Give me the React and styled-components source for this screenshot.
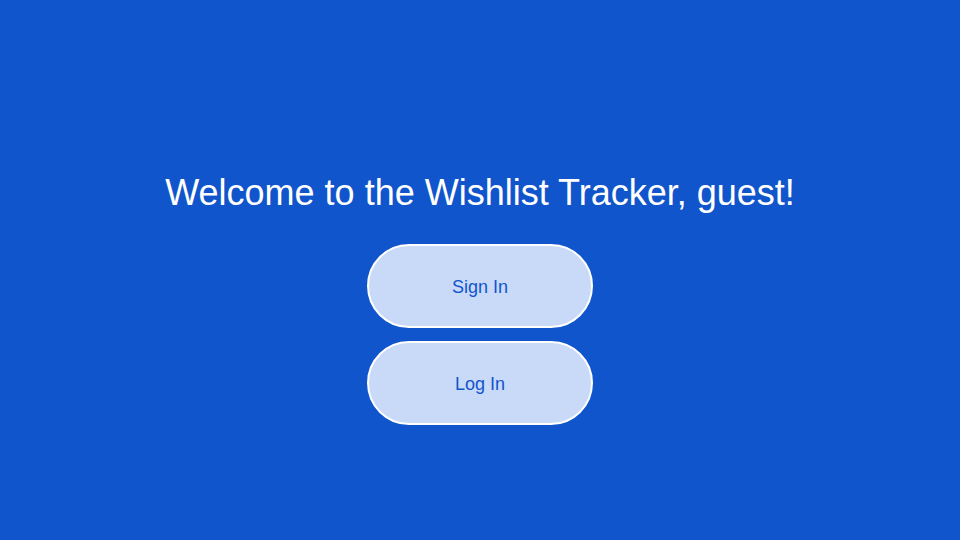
import React from 'react'
import styled, { createGlobalStyle } from 'styled-components'

const GlobalStyle = createGlobalStyle`
  html, body {
    margin: 0;
    padding: 0;
    background-color: #1155cc;
  }
  body {
    font-family: "Liberation Sans", Arial, sans-serif;
  }
`

const Page = styled.main`
  width: 960px;
  height: 540px;
  display: flex;
  flex-direction: column;
  align-items: center;
  justify-content: center;
  padding-top: 56px;
  box-sizing: border-box;
  background-color: #1155cc;
`

const Title = styled.h1`
  margin: 0 0 30px;
  font-size: 36px;
  font-weight: 400;
  color: #ffffff;
  line-height: 1.2;
`

const Actions = styled.div`
  display: flex;
  flex-direction: column;
  gap: 13px;
`

const PillButton = styled.button`
  width: 226px;
  height: 84px;
  padding: 2px 0 0;
  border: 2px solid #ffffff;
  border-radius: 42px;
  background-color: #c9daf8;
  color: #1155cc;
  font-family: "Liberation Sans", Arial, sans-serif;
  font-size: 18px;
  cursor: pointer;
`

const App = () => {
  return (
    <>
      <GlobalStyle />
      <Page>
        <Title>Welcome to the Wishlist Tracker, guest!</Title>
        <Actions>
          <PillButton>Sign In</PillButton>
          <PillButton>Log In</PillButton>
        </Actions>
      </Page>
    </>
  )
}

export default App
